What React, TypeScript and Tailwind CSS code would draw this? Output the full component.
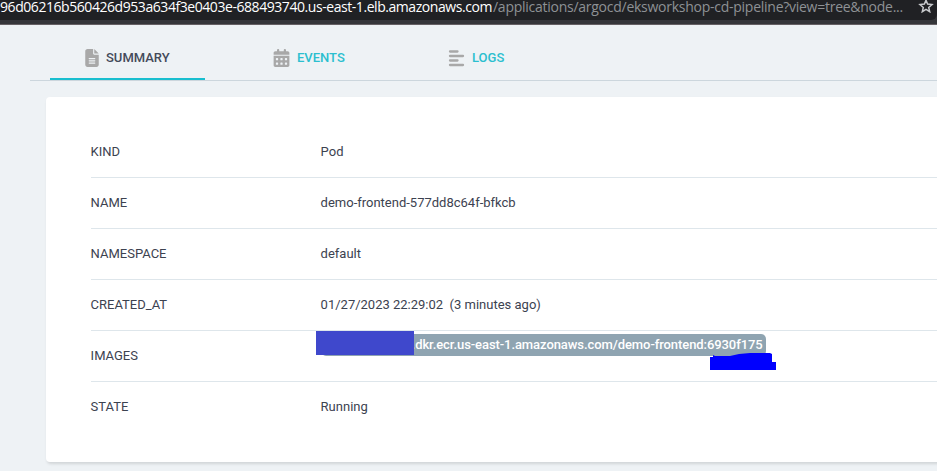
import type { ReactNode } from "react";
import { FaFileLines, FaCalendarDays } from "react-icons/fa6";

function AddressBar() {
  return (
    <header className="h-[25px] border-b border-[#656064] bg-[#35363a]">
      <div className="flex h-5 items-start rounded-br-md bg-[#202124] font-['Open_Sans','Noto_Sans',sans-serif] text-[14px] leading-[14px] whitespace-nowrap">
        <span className="w-[493px] shrink-0 tracking-[-0.44px] text-white">
          96d06216b560426d953a634f3e0403e-688493740.us-east-1.elb.amazonaws.com
        </span>
        <span className="w-[425px] shrink-0 tracking-[-0.26px] text-[#8e9195]">
          /applications/argocd/eksworkshop-cd-pipeline?view=tree&amp;node...
        </span>
        <svg className="-mt-px h-[14px] w-[16px] shrink-0" viewBox="0 0 16 14" fill="none" stroke="#c8cacd" strokeWidth="1.5">
          <path d="M8 1.2 9.6 5.1 14 5.5 10.7 8.4 11.7 12.7 8 10.4 4.3 12.7 5.3 8.4 2 5.5 6.4 5.1Z" />
        </svg>
      </div>
    </header>
  );
}

function LinesIcon() {
  return (
    <svg className="h-[18px] w-[17px]" viewBox="0 0 17 18" fill="none" stroke="currentColor" strokeWidth="2.3" strokeLinecap="round">
      <path d="M2 2.5H9.5M2 7H15M2 11.5H9.5M2 16H15" />
    </svg>
  );
}

function Tab({ icon, label, active, className }: { icon: ReactNode; label: string; active?: boolean; className: string }) {
  return (
    <div
      className={`flex h-[55px] items-center border-b-2 pt-[13px] text-[13px] font-medium ${
        active ? "border-[#18becf] text-[#444a5a]" : "border-transparent text-[#2bbfcf]"
      } ${className}`}
    >
      <span className="text-[#a8a8a8]">{icon}</span>
      <span>{label}</span>
    </div>
  );
}

function Row({ label, children, last }: { label: string; children: ReactNode; last?: boolean }) {
  return (
    <div className={`flex items-center ${last ? "h-[50px]" : "h-[51px] border-b border-[#dee6eb]"}`}>
      <div className="w-[230px] shrink-0">{label}</div>
      <div className="whitespace-pre">{children}</div>
    </div>
  );
}

export default function App() {
  return (
    <div className="h-[471px] w-[937px] overflow-hidden bg-[#eef2f5] font-[Roboto,sans-serif] text-[13px] text-[#3c4250]">
      <AddressBar />
      <nav className="ml-[30px] flex h-14 border-b border-[#ccd6dd] pl-5">
        <Tab active label="SUMMARY" className="w-[155px] gap-[7px] pl-[35px]" icon={<FaFileLines className="h-[18px] w-[14px]" />} />
        <Tab label="EVENTS" className="w-[175px] gap-[7px] pl-[68px]" icon={<FaCalendarDays className="h-[18px] w-[17px]" />} />
        <Tab label="LOGS" className="w-[175px] gap-[7px] pl-[68px]" icon={<LinesIcon />} />
      </nav>
      <main className="mt-4 ml-[46px] h-[365px] w-[920px] rounded bg-white py-[30px] pl-[44.6px] shadow-[1px_2px_3px_rgba(0,0,0,0.12)]">
        <Row label="KIND">Pod</Row>
        <Row label="NAME">demo-frontend-577dd8c64f-bfkcb</Row>
        <Row label="NAMESPACE">default</Row>
        <Row label="CREATED_AT">{"01/27/2023 22:29:02  (3 minutes ago)"}</Row>
        <Row label="IMAGES">
          <div className="relative -mt-[22px] flex h-[22px] w-[445px] items-center justify-end rounded-[5px] bg-[#8fa4b1] pr-[3px] font-medium tracking-[-0.08px] text-white">
            .dkr.ecr.us-east-1.amazonaws.com/demo-frontend:6930f175
            <div className="absolute -top-[3px] -left-[4.6px] h-6 w-[98px] bg-[#3f48cc]" />
            <svg className="absolute top-[19px] left-[389.4px] h-[18px] w-[67px]" viewBox="0 0 67 18">
              <path d="M0 4 3 4 3 2 5 3 20 3 29 1 40 0 60 0 62 1 62 9 66 9 66 17 0 17Z" fill="#0000fe" />
            </svg>
          </div>
        </Row>
        <Row label="STATE" last>Running</Row>
      </main>
    </div>
  );
}
